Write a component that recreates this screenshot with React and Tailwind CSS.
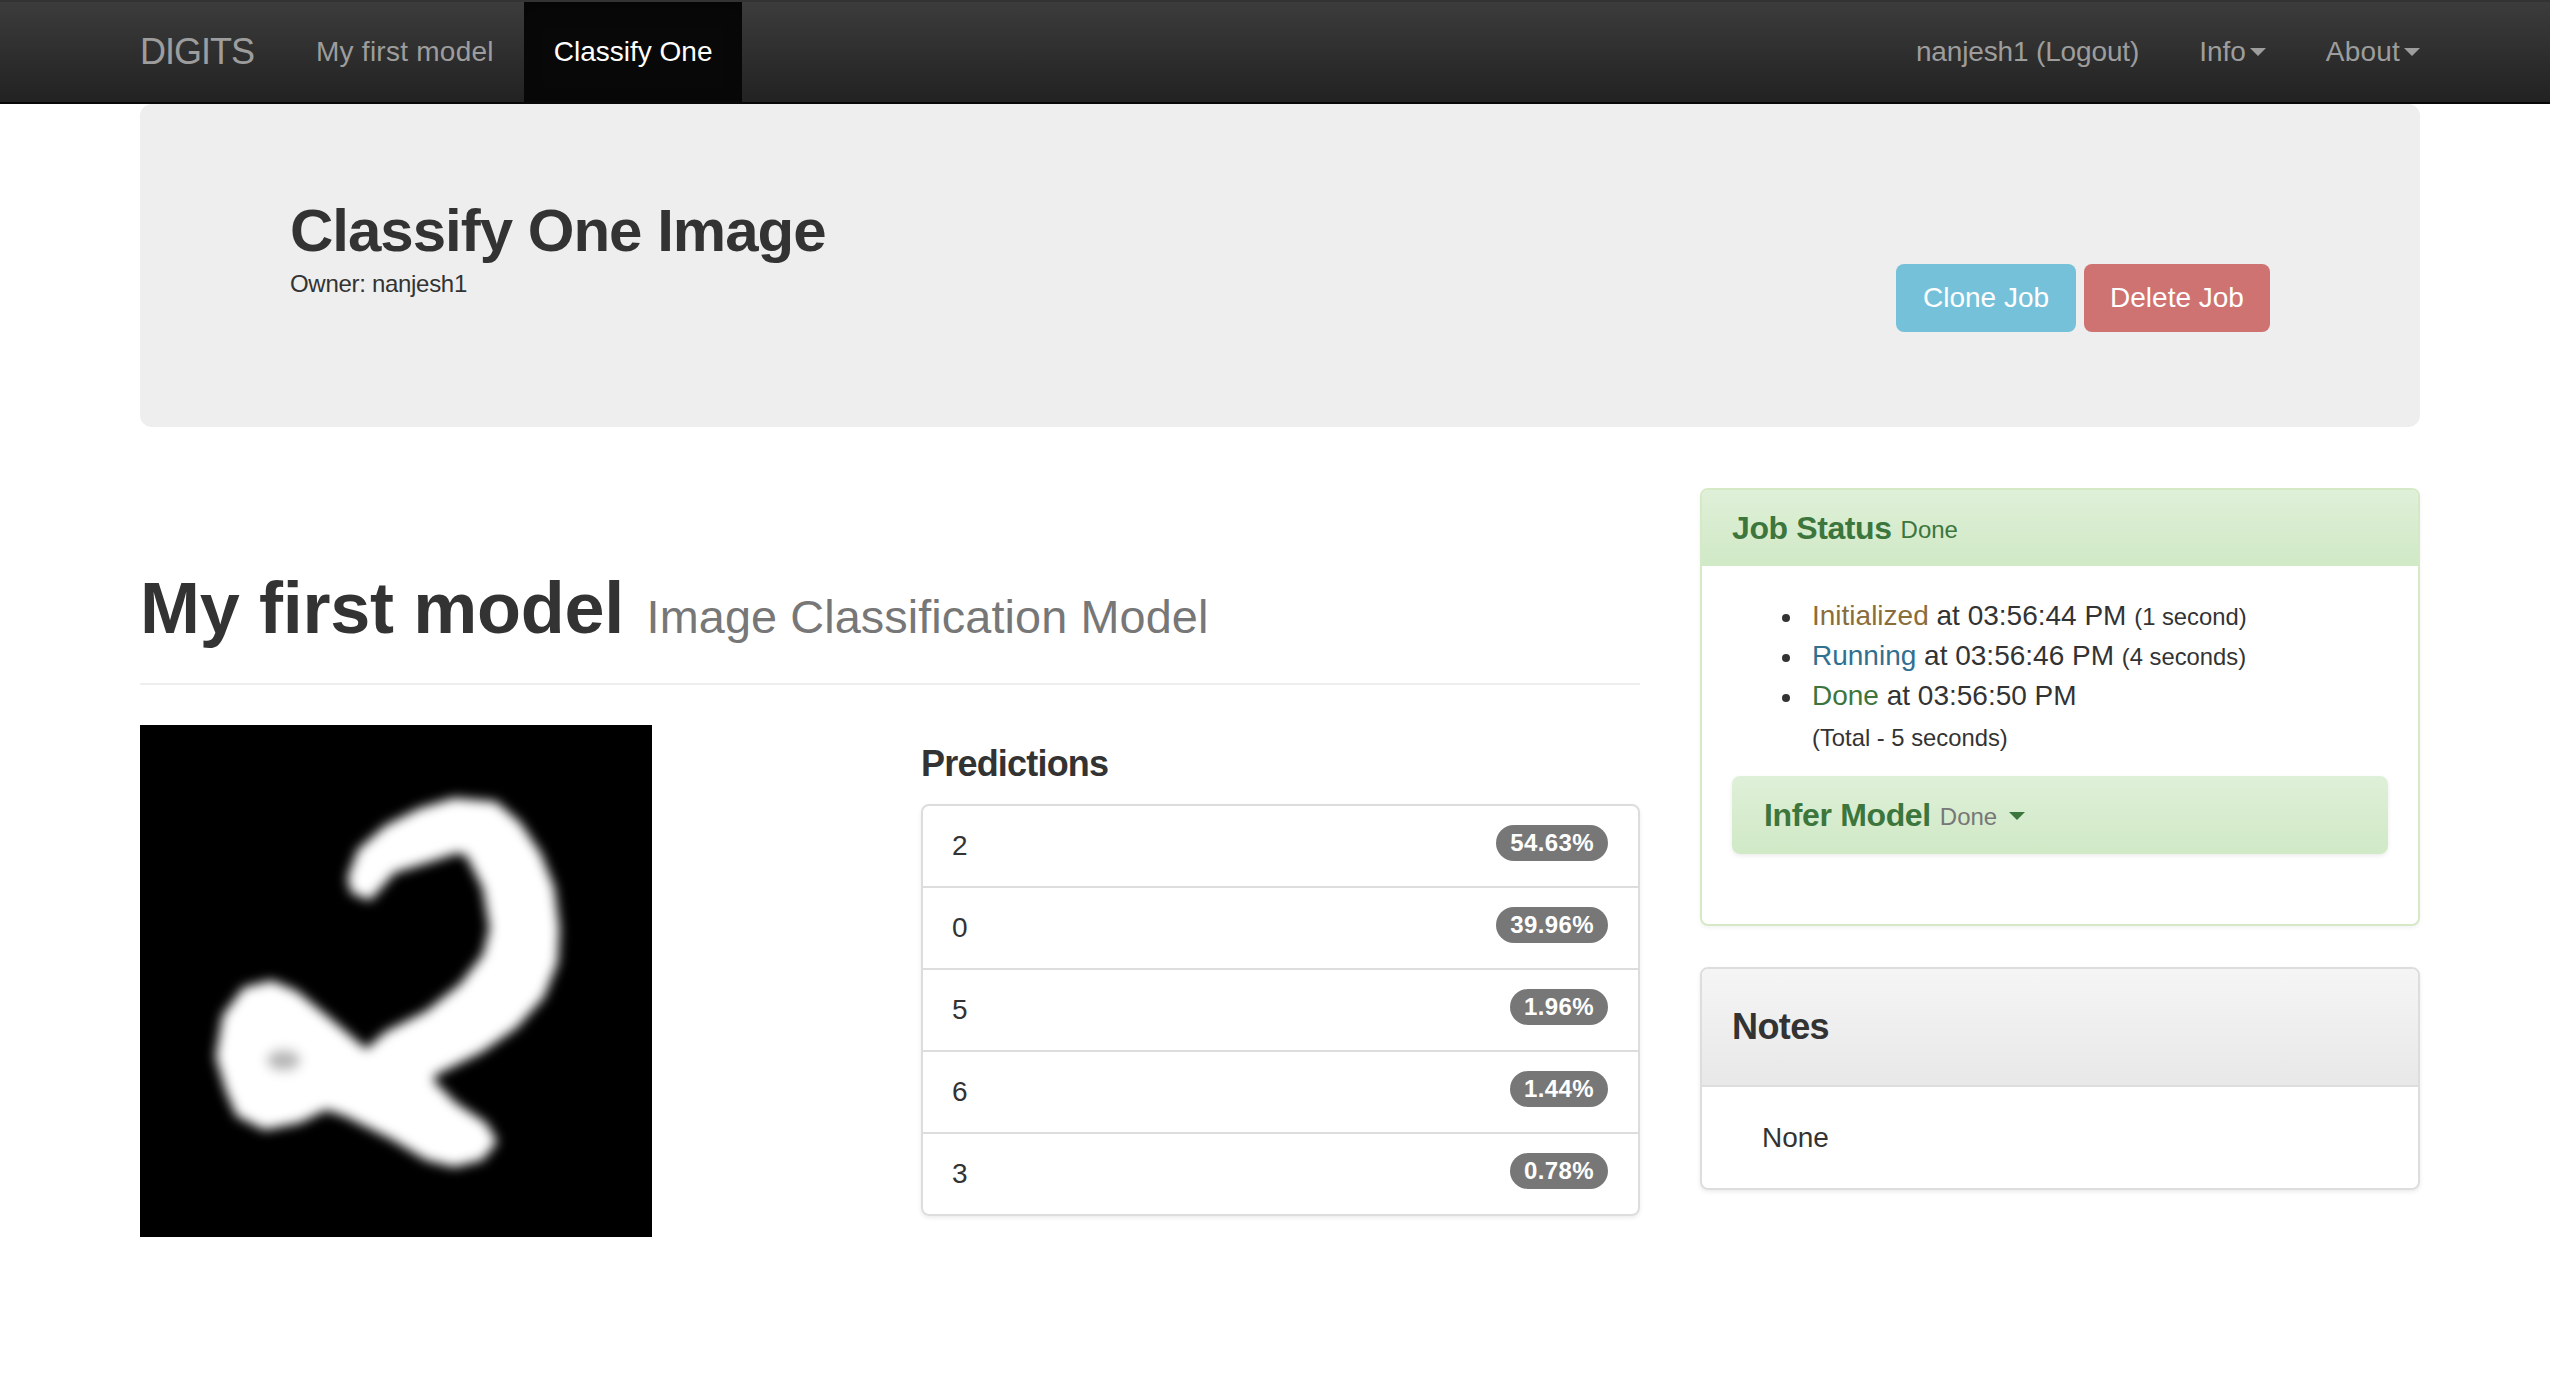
import React from "react";

const preds = [
  ["2", "54.63%"],
  ["0", "39.96%"],
  ["5", "1.96%"],
  ["6", "1.44%"],
  ["3", "0.78%"],
];

function Caret({ className }) {
  return (
    <svg viewBox="0 0 16 8" className={className} aria-hidden="true">
      <path d="M0 0H16L8 8Z" fill="currentColor" />
    </svg>
  );
}

function Dot() {
  return <span className="w-[8px] h-[8px] rounded-full bg-[#333] mr-[22px] mt-[3px] shrink-0" />;
}

function Digit() {
  return (
    <svg viewBox="30 18 1515 1515" className="block w-[512px] h-[512px] bg-black shrink-0" aria-hidden="true">
      <defs>
        <filter id="digitblur" x="-10%" y="-10%" width="120%" height="120%">
          <feGaussianBlur stdDeviation="17" />
        </filter>
      </defs>
      <g filter="url(#digitblur)">
        <path
          fill="#fff"
          stroke="#fff"
          strokeWidth="12"
          strokeLinejoin="round"
          d="M650 470 L680 390 L760 320 L860 270 L960 240 L1080 250 L1150 310 L1210 400 L1250 500 L1265 620 L1260 720 L1220 820 L1140 910 L1040 980 L900 1050 L890 1070 L960 1140 L1050 1200 L1080 1250 L1040 1300 L960 1320 L880 1300 L780 1240 L640 1170 L580 1150 L500 1190 L400 1210 L320 1170 L290 1100 L260 1000 L280 880 L340 800 L420 780 L490 810 L600 900 L700 985 L760 930 L880 870 L980 790 L1050 700 L1070 620 L1050 500 L1000 400 L970 390 L880 420 L780 450 L710 530 L660 510 Z"
        />
        <ellipse cx="455" cy="1010" rx="50" ry="32" fill="#b8b8b8" />
      </g>
    </svg>
  );
}

export default function App() {
  return (
    <div className="min-h-[1378px] bg-white text-[#333] text-[28px] leading-[40px] [font-family:'Liberation_Sans',Arial,sans-serif]">
      <nav className="h-[104px] border-y-2 border-[#080808] border-t-[#333] bg-linear-to-b from-[#3c3c3c] to-[#222] pl-[140px] pr-[130px] flex items-stretch text-[#9d9d9d]">
        <div className="text-[36px] leading-[40px] pt-[30px] w-[146px] tracking-[-1px]">DIGITS</div>
        <div className="px-[30px] flex items-center tracking-[0.25px]">My first model</div>
        <div className="px-[30px] flex items-center text-white bg-[#080808] shadow-[inset_0_6px_18px_rgba(0,0,0,0.25)]">Classify One</div>
        <div className="ml-auto flex items-center gap-[60px]">
          <span className="tracking-[-0.15px]">nanjesh1 (Logout)</span>
          <span className="flex items-center gap-[4px]">Info<Caret className="w-[16px] h-[8px]" /></span>
          <span className="flex items-center gap-[4px] tracking-[0.2px]">About<Caret className="w-[16px] h-[8px]" /></span>
        </div>
      </nav>

      <div className="pl-[140px] pr-[130px]">
        <section className="h-[323px] rounded-[12px] bg-[#eee] pl-[150px] pr-[150px] pt-[94px] flex justify-between">
          <div>
            <h1 className="text-[60px] leading-[66px] font-bold tracking-[-1px]">Classify One Image</h1>
            <p className="text-[24px] leading-[34px] mt-[3px] tracking-[-0.3px]">Owner: nanjesh1</p>
          </div>
          <div className="flex gap-[8px] mt-[66px] h-[68px] text-white">
            <button className="w-[180px] h-[68px] rounded-[8px] bg-[#76c1da]">Clone Job</button>
            <button className="w-[186px] h-[68px] rounded-[8px] bg-[#cf7272]">Delete Job</button>
          </div>
        </section>

        <div className="flex gap-[60px] pt-[61px]">
          <main className="w-[1500px]">
            <div className="pt-[80px] pb-[35px] border-b-2 border-[#eee]">
              <h1 className="text-[72px] leading-[80px] font-bold tracking-[-0.3px]">
                My first model <small className="text-[46.8px] leading-none font-normal text-[#777] tracking-[0.1px] ml-[3px]">Image Classification Model</small>
              </h1>
            </div>
            <div className="flex justify-between mt-[40px]">
              <Digit />
              <div className="w-[719px] pt-[19px]">
                <h3 className="text-[36px] leading-[40px] mb-[20px] font-bold tracking-[-0.8px]">Predictions</h3>
                <ul className="border-2 border-[#ddd] rounded-[8px] shadow-[0_2px_4px_rgba(0,0,0,0.08)] divide-y-2 divide-[#ddd]">
                  {preds.map(([d, p]) => (
                    <li key={d} className="h-[80px] box-content pl-[29px] pr-[30px] flex items-center justify-between">
                      <span>{d}</span>
                      <span className="bg-[#777] text-white font-bold text-[24px] leading-[24px] px-[14px] py-[6px] rounded-[20px] mb-[6px] tracking-[0.4px]">{p}</span>
                    </li>
                  ))}
                </ul>
              </div>
            </div>
          </main>

          <aside className="w-[720px]">
            <div className="h-[438px] border-2 border-[#d6e9c6] rounded-[8px] shadow-[0_2px_4px_rgba(0,0,0,0.05)] overflow-hidden">
              <div className="h-[76px] px-[30px] flex items-center text-[#3c763d] bg-linear-to-b from-[#dff0d8] to-[#d0e9c6]">
                <span className="text-[32px] font-bold tracking-[-0.4px]">Job Status</span>
                <span className="text-[24px] ml-[9px] mt-[4px]">Done</span>
              </div>
              <div className="px-[30px] pt-[30px]">
                <ul className="pl-[50px]">
                  <li className="flex items-center"><Dot /><span><span className="text-[#8a6d3b]">Initialized</span> at 03:56:44 PM <small className="text-[23.8px] leading-none">(1 second)</small></span></li>
                  <li className="flex items-center"><Dot /><span><span className="text-[#31708f]">Running</span> at 03:56:46 PM <small className="text-[23.8px] leading-none">(4 seconds)</small></span></li>
                  <li className="flex items-center"><Dot /><span><span className="text-[#3c763d]">Done</span> at 03:56:50 PM</span></li>
                </ul>
                <p className="pl-[80px] mt-[2px] text-[23.8px]">(Total - 5 seconds)</p>
                <div className="mt-[18px] h-[78px] px-[32px] rounded-[8px] flex items-center bg-linear-to-b from-[#dff0d8] to-[#d0e9c6] shadow-[0_2px_4px_rgba(0,0,0,0.08)]">
                  <span className="text-[32px] text-[#3c763d] font-bold tracking-[-0.35px]">Infer Model</span>
                  <span className="text-[24px] text-[#777] ml-[9px] mt-[4px]">Done</span>
                  <Caret className="w-[16px] h-[8px] ml-[12px] mt-[2px] text-[#3c763d]" />
                </div>
              </div>
            </div>

            <div className="mt-[41px] h-[223px] border-2 border-[#ddd] rounded-[8px] shadow-[0_2px_4px_rgba(0,0,0,0.08)] overflow-hidden">
              <div className="h-[118px] border-b-2 border-[#ddd] px-[30px] flex items-center bg-linear-to-b from-[#f5f5f5] to-[#e8e8e8]">
                <h3 className="text-[36px] font-bold tracking-[-0.6px]">Notes</h3>
              </div>
              <div className="pl-[60px] pt-[31px]">None</div>
            </div>
          </aside>
        </div>
      </div>
    </div>
  );
}
